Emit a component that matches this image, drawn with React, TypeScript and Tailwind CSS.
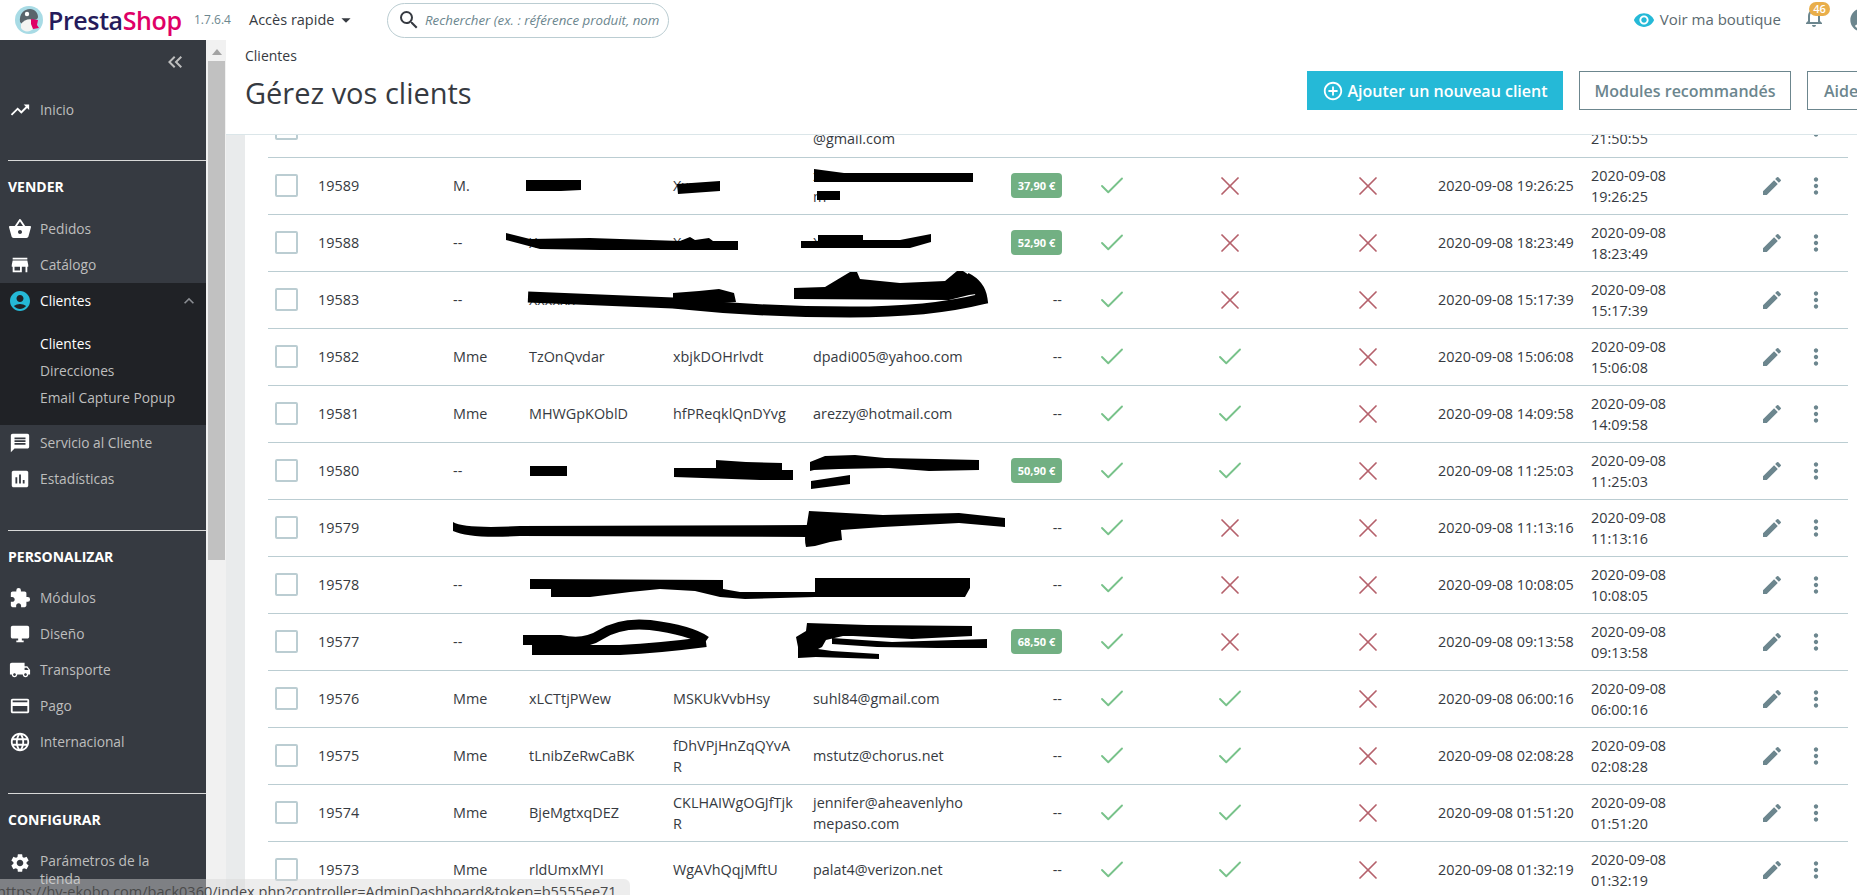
import type { ReactNode } from "react";
import { Check, X } from "lucide-react";
import {
  MdAccountCircle,
  MdAddCircleOutline,
  MdArrowDropDown,
  MdAssessment,
  MdCreditCard,
  MdDesktopWindows,
  MdEdit,
  MdExpandLess,
  MdExtension,
  MdKeyboardDoubleArrowLeft,
  MdLanguage,
  MdLocalShipping,
  MdMessage,
  MdMoreVert,
  MdNotificationsNone,
  MdSearch,
  MdSettings,
  MdShoppingBasket,
  MdStore,
  MdTrendingUp,
  MdVisibility,
} from "react-icons/md";

interface Customer {
  id: string;
  social: string;
  first: string;
  last: string;
  email: string;
  sales?: string;
  enabled: boolean;
  news: boolean;
  partner: boolean;
  date: string;
  time: string;
}

const rows: Customer[] = [
  { id: "", social: "", first: "", last: "", email: "@gmail.com", enabled: true, news: false, partner: false, date: "", time: "21:50:55" },
  { id: "19589", social: "M.", first: "Xxx", last: "Xxxx", email: "xxxxxxxxxxxxxxxxxxxxm", sales: "37,90 €", enabled: true, news: false, partner: false, date: "2020-09-08", time: "19:26:25" },
  { id: "19588", social: "--", first: "Xxxxx", last: "Xxxx", email: "Xxxxx", sales: "52,90 €", enabled: true, news: false, partner: false, date: "2020-09-08", time: "18:23:49" },
  { id: "19583", social: "--", first: "Xxxxxx", last: "Xxxx", email: "", enabled: true, news: false, partner: false, date: "2020-09-08", time: "15:17:39" },
  { id: "19582", social: "Mme", first: "TzOnQvdar", last: "xbjkDOHrlvdt", email: "dpadi005@yahoo.com", enabled: true, news: true, partner: false, date: "2020-09-08", time: "15:06:08" },
  { id: "19581", social: "Mme", first: "MHWGpKOblD", last: "hfPReqklQnDYvg", email: "arezzy@hotmail.com", enabled: true, news: true, partner: false, date: "2020-09-08", time: "14:09:58" },
  { id: "19580", social: "--", first: "", last: "", email: "", sales: "50,90 €", enabled: true, news: true, partner: false, date: "2020-09-08", time: "11:25:03" },
  { id: "19579", social: "", first: "", last: "", email: "", enabled: true, news: false, partner: false, date: "2020-09-08", time: "11:13:16" },
  { id: "19578", social: "--", first: "", last: "", email: "", enabled: true, news: false, partner: false, date: "2020-09-08", time: "10:08:05" },
  { id: "19577", social: "--", first: "", last: "", email: "", sales: "68,50 €", enabled: true, news: false, partner: false, date: "2020-09-08", time: "09:13:58" },
  { id: "19576", social: "Mme", first: "xLCTtjPWew", last: "MSKUkVvbHsy", email: "suhl84@gmail.com", enabled: true, news: true, partner: false, date: "2020-09-08", time: "06:00:16" },
  { id: "19575", social: "Mme", first: "tLnibZeRwCaBK", last: "fDhVPjHnZqQYvAR", email: "mstutz@chorus.net", enabled: true, news: true, partner: false, date: "2020-09-08", time: "02:08:28" },
  { id: "19574", social: "Mme", first: "BjeMgtxqDEZ", last: "CKLHAIWgOGJfTjkR", email: "jennifer@aheavenlyhomepaso.com", enabled: true, news: true, partner: false, date: "2020-09-08", time: "01:51:20" },
  { id: "19573", social: "Mme", first: "rldUmxMYI", last: "WgAVhQqjMftU", email: "palat4@verizon.net", enabled: true, news: true, partner: false, date: "2020-09-08", time: "01:32:19" },
];

function NavItem({ icon, label }: { icon: ReactNode; label: string }) {
  return (
    <div className="flex h-9 items-center text-[13.75px] text-[#bebebe]">
      <span className="flex w-10 shrink-0 justify-center text-white">{icon}</span>
      {label}
    </div>
  );
}

function SectionTitle({ label }: { label: string }) {
  return <div className="flex h-[49px] items-center pl-2 pt-[3px] text-sm font-bold text-white">{label}</div>;
}

function Divider({ className }: { className: string }) {
  return <div className={`ml-2 h-px bg-[#d8d8d8] ${className}`} />;
}

function Sidebar() {
  return (
    <aside className="w-[206px] shrink-0 overflow-hidden bg-[#363a41]">
      <div className="flex h-11 items-center justify-end pr-[19px] text-[#bebebe]">
        <MdKeyboardDoubleArrowLeft size={24} />
      </div>
      <div className="mt-2">
        <NavItem icon={<MdTrendingUp size={22} />} label="Inicio" />
      </div>
      <Divider className="mt-8" />
      <SectionTitle label="VENDER" />
      <div className="mt-px">
        <NavItem icon={<MdShoppingBasket size={24} />} label="Pedidos" />
        <NavItem icon={<MdStore size={22} />} label="Catálogo" />
      </div>
      <div className="h-[142px] bg-[#202226]">
        <div className="flex h-9 items-center text-[13.75px] text-white">
          <span className="flex w-10 shrink-0 justify-center text-[#25b9d7]">
            <MdAccountCircle size={24} />
          </span>
          Clientes
          <MdExpandLess size={20} className="ml-auto mr-[7px] text-[#8a8d92]" />
        </div>
        <div className="mt-[11px] pl-10 text-[13.75px] leading-[27px] text-[#bebebe]">
          <div className="text-white">Clientes</div>
          <div>Direcciones</div>
          <div>Email Capture Popup</div>
        </div>
      </div>
      <NavItem icon={<MdMessage size={22} />} label="Servicio al Cliente" />
      <NavItem icon={<MdAssessment size={22} />} label="Estadísticas" />
      <Divider className="mt-[33px]" />
      <SectionTitle label="PERSONALIZAR" />
      <NavItem icon={<MdExtension size={22} />} label="Módulos" />
      <NavItem icon={<MdDesktopWindows size={22} />} label="Diseño" />
      <NavItem icon={<MdLocalShipping size={22} />} label="Transporte" />
      <NavItem icon={<MdCreditCard size={22} />} label="Pago" />
      <NavItem icon={<MdLanguage size={22} />} label="Internacional" />
      <Divider className="mt-[33px]" />
      <SectionTitle label="CONFIGURAR" />
      <div className="mt-[9px] flex text-[13.75px] leading-[18px] text-[#bebebe]">
        <span className="flex w-10 shrink-0 justify-center text-white">
          <MdSettings size={22} />
        </span>
        <span className="w-[130px]">Parámetros de la tienda</span>
      </div>
    </aside>
  );
}

function Logo() {
  return (
    <svg width="28" height="28" viewBox="0 0 28 28" className="shrink-0">
      <circle cx="14" cy="14" r="14" fill="#a8dbe5" />
      <path d="M5 16C4 8 9 3 15 3c5 0 8 4 8 8 0 2-2 3-5 3-4 0-7 1-9 6z" fill="#59656c" />
      <circle cx="12" cy="8" r="2.2" fill="#fff" />
      <path d="M6 18c3-4 8-6 12-4l1 8c-3 4-10 5-13 0z" fill="#f4f4f2" />
      <path d="M16 13l7 1-1 5 2 3-6 1-2-5z" fill="#df0067" />
    </svg>
  );
}

function TopBar() {
  return (
    <header className="flex h-10 shrink-0 items-center overflow-hidden bg-white pl-[15px] text-sm text-[#363a41]">
      <Logo />
      <div className="ml-[5px] w-[146px] shrink-0 text-[25px] leading-none font-semibold tracking-[-0.4px] text-[#251b5b]">
        Presta<span className="text-[#df0067]">Shop</span>
      </div>
      <div className="w-[55px] shrink-0 text-xs text-[#6c868e]">1.7.6.4</div>
      <div className="flex w-[138px] shrink-0 items-center text-[14.5px]">
        Accès rapide
        <MdArrowDropDown size={22} className="ml-px" />
      </div>
      <div className="flex h-[35px] w-[282px] shrink-0 items-center overflow-hidden rounded-full border border-[#bbcdd2] pl-[9px]">
        <MdSearch size={24} className="shrink-0 text-[#363a41]" />
        <span className="ml-1 whitespace-nowrap text-[13.3px] text-[#6c868e] italic">Rechercher (ex. : référence produit, nom</span>
      </div>
      <div className="ml-auto flex shrink-0 items-center">
        <MdVisibility size={22} className="text-[#25b9d7]" />
        <span className="ml-[5px] text-[15px] text-[#5b6a70]">Voir ma boutique</span>
        <div className="relative ml-[21px] h-6 w-6 -translate-y-[3px] text-[#6c868e]">
          <MdNotificationsNone size={24} />
          <span className="absolute -top-[3px] left-[7px] flex h-[14px] w-[21px] items-center justify-center rounded-full bg-[#e9ae4a] text-[11px] font-semibold text-white">46</span>
        </div>
        <MdAccountCircle size={28} className="-mr-[19px] ml-[22px] text-[#6c868e]" />
      </div>
    </header>
  );
}

function PageHeader() {
  return (
    <div className="flex h-[95px] shrink-0 overflow-hidden border-b border-[#dbe6e9] bg-white">
      <div className="w-[1081px] shrink-0 pl-[19px] text-[#363a41]">
        <div className="mt-[6px] text-sm leading-5">Clientes</div>
        <h1 className="mt-[7px] text-[29px] leading-10">Gérez vos clients</h1>
      </div>
      <div className="mt-[31px] flex h-[39px] shrink-0 gap-4 text-base font-semibold">
        <div className="flex w-[256px] items-center justify-center gap-[3px] bg-[#25b9d7] text-white">
          <MdAddCircleOutline size={22} />
          Ajouter un nouveau client
        </div>
        <div className="flex w-[212px] items-center justify-center border border-[#6c868e] text-[#6c868e]">Modules recommandés</div>
        <div className="flex w-[80px] items-center border border-[#6c868e] pl-4 text-[#6c868e]">Aide</div>
      </div>
    </div>
  );
}

function StatusMark({ on }: { on: boolean }) {
  return (
    <div className="flex justify-center">
      {on ? (
        <Check size={30} strokeWidth={1.5} className="text-[#78c28a]" />
      ) : (
        <X size={32} strokeWidth={1.3} className="text-[#b5616b]" />
      )}
    </div>
  );
}

function CustomerRow({ row }: { row: Customer }) {
  // the first row runs under the page header: only its last lines show
  const partial = !row.id;
  return (
    <tr className="h-[57px] border-b border-[#bbcdd2]">
      <td className="pl-[7px]">
        <div className="h-[23px] w-[23px] rounded-[2px] border-2 border-[#bbcdd2]" />
      </td>
      <td>{row.id}</td>
      <td>{row.social}</td>
      <td>{row.first}</td>
      <td>
        <div className="w-[122px] break-all">{row.last}</div>
      </td>
      <td>
        <div className={partial ? "w-[155px] break-all pt-[21px]" : "w-[155px] break-all"}>{row.email}</div>
      </td>
      <td className="text-right">
        {row.sales ? (
          <span className="ml-auto flex h-[25px] w-[51px] items-center justify-center rounded-[4px] bg-[#72b083] text-[11px] font-bold text-white">{row.sales}</span>
        ) : partial ? null : (
          "--"
        )}
      </td>
      <td>{!partial && <StatusMark on={row.enabled} />}</td>
      <td>{!partial && <StatusMark on={row.news} />}</td>
      <td>{!partial && <StatusMark on={row.partner} />}</td>
      <td>{partial ? "" : `${row.date} ${row.time}`}</td>
      <td>
        <div className={partial ? "w-[90px] pt-[21px]" : "w-[90px]"}>
          {row.date} {row.time}
        </div>
      </td>
      <td>
        <div className="flex items-center pl-5 text-[#6c868e]">
          <MdEdit size={24} className={partial ? "invisible" : ""} />
          <MdMoreVert size={26} className="ml-[19px]" />
        </div>
      </td>
    </tr>
  );
}

function CustomerTable() {
  return (
    <table className="-mt-[35px] w-[1580px] table-fixed text-[14.4px] leading-[21px] text-[#363a41]">
      <colgroup>
        <col className="w-[50px]" />
        <col className="w-[135px]" />
        <col className="w-[76px]" />
        <col className="w-[144px]" />
        <col className="w-[140px]" />
        <col className="w-[187px]" />
        <col className="w-[62px]" />
        <col className="w-[100px]" />
        <col className="w-[136px]" />
        <col className="w-[140px]" />
        <col className="w-[153px]" />
        <col className="w-[149px]" />
        <col className="w-[108px]" />
      </colgroup>
      <tbody>
        {rows.map((row, i) => (
          <CustomerRow key={i} row={row} />
        ))}
      </tbody>
    </table>
  );
}

// marker strokes the screenshot has over the redacted customers
function Redactions() {
  return (
    <svg className="pointer-events-none absolute inset-0 h-full w-full" viewBox="0 0 1857 895" fill="#000">
      <path d="M526 180h55v10l-20 1h-35z" />
      <path d="M677 184l43-3v10l-42 3z" />
      <path d="M814 169l30 4h129v9H814z" />
      <path d="M817 191h23v9h-23z" />
      <path d="M506 233l24 6 60-1 90 3 10-4 5 3 14-2 4 3h25v9H600l-60-1-34-9z" />
      <path d="M801 241h17v-6h45v5h37l31-6v8l-21 6H801z" />
      <path d="M794 299v-11l31-1 25-15h7l3 7 40 4 45-2 12-10h6l12 8 8 14-14 2-20 5z" />
      <path d="M673 293l26-2 20-2 15 4 2 9-35 2-28-2z" />
      <path d="M528 297l145 6q87 9 177 9 80 0 132-13-2-14-16-21" fill="none" stroke="#000" strokeWidth="11" />
      <path d="M530 466h37v10h-37z" />
      <path d="M674 468h42v-8l30 2 36 1v7h11v10h-33l-86-3z" />
      <path d="M810 462l15-6 30-1 30 3 50 1 44 1v10l-50 1-40-3-50 1-25 1-4 1z" />
      <path d="M811 481l39-6v9l-39 5z" />
      <path d="M453 522q12 7 67 4l290-1v12l-290-1q-50 3-67-5z" />
      <path d="M809 511l74 4 76-2 46 5v9l-46-4-76 4-42 3 1 10-12 2-15 4-9 1q-2-7 0-17z" />
      <path d="M530 579l193 1v9l17 3h75v-14l155 0v10l-5 9H815l-70 2-25-2-25-6-35-2-30 3-40 5h-39v-8h-21z" />
      <path d="M523 640h37q25 5 40-5 20-13 50-10 40 5 56 16M532 650h88q40-2 86-8" fill="none" stroke="#000" strokeWidth="10" />
      <path d="M807 623l60 2 105 1v10l-60 3-59-3-10 0-17 4-4 7-4 2 14 2 47 3v5l-63-2-18 1v-11l-2-10 10-6z" />
      <path d="M832 638l60 4 95-3v9h-50l-60-1-45-3z" />
    </svg>
  );
}

export default function App() {
  return (
    <div className="relative flex h-screen w-screen flex-col overflow-hidden bg-white font-['Open_Sans',sans-serif]">
      <TopBar />
      <div className="flex min-h-0 flex-1">
        <Sidebar />
        {/* sidebar scrollbar */}
        <div className="w-5 shrink-0 bg-[#f1f1f1] pl-[2px]">
          <div className="mx-auto mt-[9px] h-0 w-0 border-x-[5px] border-b-[6px] border-x-transparent border-b-[#a3a3a3]" />
          <div className="mt-[6px] h-[499px] w-[17px] bg-[#c1c1c1]" />
        </div>
        <main className="flex min-w-0 flex-1 flex-col">
          <PageHeader />
          <div className="min-h-0 flex-1 overflow-hidden bg-[#e9ebec] pl-[19px]">
            <div className="h-full overflow-hidden bg-white pl-[23px]">
              <CustomerTable />
            </div>
          </div>
        </main>
      </div>
      <Redactions />
      <div className="absolute bottom-0 left-0 h-4 w-[630px] overflow-hidden rounded-tr-md bg-[#d8d8d8]/45 pt-[3px] -indent-[3px] text-[14.5px] leading-[20px] whitespace-nowrap text-[#4a4a4a]">
        https://hy-ekobo.com/back0360/index.php?controller=AdminDashboard&amp;token=b5555ee71
      </div>
    </div>
  );
}
